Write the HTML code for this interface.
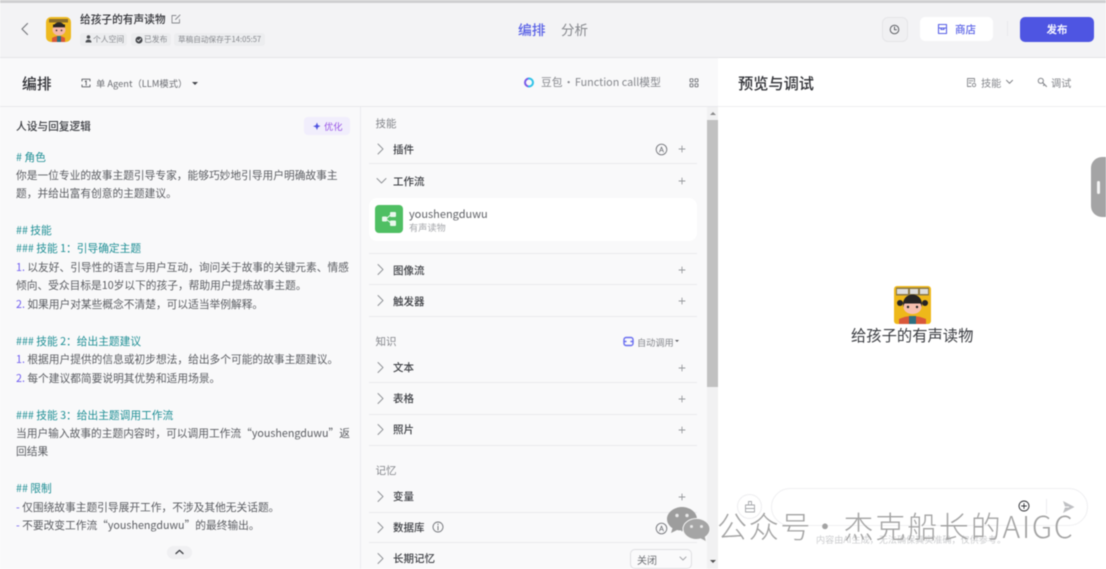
<!DOCTYPE html>
<html lang="zh-CN"><head><meta charset="utf-8"><title>给孩子的有声读物</title>
<style>
*{box-sizing:border-box;margin:0;padding:0}
html,body{width:1106px;height:569px;overflow:hidden;background:#fff}
body{position:relative;font-family:"Noto Sans CJK SC","Liberation Sans",sans-serif;color:#333}
#w{position:absolute;left:0;top:0;width:1106px;height:569px;overflow:hidden;filter:blur(.45px)}
.a{position:absolute;white-space:nowrap}
.l{position:absolute;left:16px;font-size:10.73px;line-height:18px;color:#5a5c61;white-space:nowrap}
.g{color:#1f8f95}
.n{color:#6f5cf0}
.sec{position:absolute;left:375.5px;font-size:10.5px;line-height:16px;color:#84868b}
.it{position:absolute;left:393px;font-size:10.5px;line-height:16px;color:#3c3e43;font-weight:500}
.ln{position:absolute;left:369px;width:328px;height:1px;background:#e9e9ec}
.i{position:absolute;overflow:visible}
.i *{fill:none;stroke-linecap:round;stroke-linejoin:round}
</style></head><body><div id="w">
<div class="a" style="left:0;top:0;width:1106px;height:3px;background:#cfcfd1"></div>
<div class="a" style="left:0;top:3px;width:1106px;height:54px;background:#f3f3f5"></div>
<div class="a" style="left:0;top:57px;width:1106px;height:1px;background:#e4e4e7"></div>
<div class="a" style="left:0;top:58px;width:718px;height:511px;background:#f9f9fa"></div>
<div class="a" style="left:0;top:106px;width:718px;height:1px;background:#e8e8eb"></div>
<div class="a" style="left:718px;top:106px;width:388px;height:1px;background:#eeeef0"></div>
<div class="a" style="left:360px;top:107px;width:1px;height:462px;background:#ececef"></div>

<svg class="i" style="left:20px;top:22px" width="10" height="14" viewBox="0 0 10 14"><path d="M7.5 1.500 2 7l5.500 5.500" stroke="#77797e" stroke-width="1.200"/></svg>

<svg class="i" style="left:46px;top:17px" width="25" height="25" viewBox="0 0 25 25"><rect width="25" height="25" rx="5" style="fill:#eeb91f"/><rect x="3" y="2" width="19" height="3.500" style="fill:#8a6d2a"/><circle cx="13" cy="11" r="5.800" style="fill:#2c2b2b"/><ellipse cx="13" cy="13" rx="6.500" ry="5.500" style="fill:#f5b8a8"/><rect x="7" y="7.500" width="12" height="2.800" style="fill:#272525"/><circle cx="10.500" cy="13.400" r=".8" style="fill:#222"/><circle cx="15.500" cy="13.400" r=".8" style="fill:#222"/><path d="M6 25V21q7-4 13 0v4z" style="fill:#d9583a"/><rect x="11" y="19" width="4" height="6" style="fill:#2d6f80"/></svg>

<div class="a" style="left:80px;top:11px;font-size:10.700px;line-height:18px;color:#2f3035;font-weight:500">给孩子的有声读物</div>
<svg class="i" style="left:171px;top:14px" width="10" height="10" viewBox="0 0 10 10"><path d="M8.500 5.500V9H1V1.500H5M4.500 5.500 9 1" stroke="#85878c" stroke-width=".9"/></svg>

<div class="a" style="left:80px;top:33px;width:47px;height:13px;background:#ecedef;border-radius:3px"></div>
<div class="a" style="left:131px;top:33px;width:40px;height:13px;background:#ecedef;border-radius:3px"></div>
<div class="a" style="left:174px;top:33px;width:91px;height:13px;background:#ecedef;border-radius:3px"></div>
<svg class="i" style="left:85px;top:35px" width="7" height="8" viewBox="0 0 7 8"><circle cx="3.500" cy="2" r="1.800" style="fill:#4c4e52"/><path d="M.5 7.500c0-4 6-4 6 0z" style="fill:#4c4e52"/></svg>
<div class="a" style="left:93px;top:33px;font-size:7.800px;line-height:13px;color:#85878c">个人空间</div>
<svg class="i" style="left:135px;top:35.500px" width="8" height="8" viewBox="0 0 8 8"><circle cx="4" cy="4" r="3.500" style="fill:#43454a"/><path d="M2.300 4 3.600 5.200 5.700 2.800" stroke="#eee" stroke-width=".9"/></svg>
<div class="a" style="left:144px;top:33px;font-size:7.800px;line-height:13px;color:#85878c">已发布</div>
<div class="a" style="left:178px;top:33px;font-size:7.650px;line-height:13px;color:#85878c">草稿自动保存于14:05:57</div>

<div class="a" style="left:518px;top:19px;font-size:13.800px;line-height:20px;color:#5a62e6;font-weight:500">编排</div>
<div class="a" style="left:561px;top:19px;font-size:13.500px;line-height:20px;color:#85878c">分析</div>

<div class="a" style="left:882px;top:17px;width:26px;height:25px;background:#f0f0f2;border:1px solid #e5e5e8;border-radius:6px"></div>
<svg class="i" style="left:889px;top:24px" width="11" height="11" viewBox="0 0 11 11"><circle cx="5.500" cy="5.500" r="4.300" stroke="#5e6065" stroke-width="1"/><path d="M5.500 3v2.700h2" stroke="#5e6065" stroke-width="1"/></svg>
<div class="a" style="left:920px;top:17px;width:73px;height:24px;background:#fff;border-radius:5px"></div>
<svg class="i" style="left:937px;top:23px" width="11" height="12" viewBox="0 0 11 12"><path d="M1.500 1.500h8v9h-8zM1.500 5h8M4 5v1.500h3V5" stroke="#5a62e6" stroke-width="1.100"/></svg>
<div class="a" style="left:955px;top:21px;font-size:10.500px;line-height:18px;color:#5a62e6;font-weight:500">商店</div>
<div class="a" style="left:1007px;top:21px;width:1px;height:15px;background:#e9e9ec"></div>
<div class="a" style="left:1020px;top:17px;width:74px;height:25px;background:#4e55e2;border-radius:5px"></div>
<div class="a" style="left:1046.500px;top:20.500px;font-size:10.500px;line-height:18px;color:#f4f4ff;font-weight:700">发布</div>

<div class="a" style="left:22px;top:73px;font-size:14.800px;line-height:22px;color:#2f3035;font-weight:500">编排</div>
<svg class="i" style="left:81px;top:78px" width="10" height="10" viewBox="0 0 10 10"><path d="M1 3V1.200h8V3M1 7v1.800h8V7M4.200 3.500 5.200 2.800v4.400" stroke="#55575c" stroke-width=".9"/></svg>
<div class="a" style="left:96px;top:76px;font-size:9.300px;line-height:15px;color:#6c6e73">单 Agent（LLM模式）</div>
<div class="a" style="left:192px;top:82px;width:0;height:0;border:3px solid transparent;border-top:3.500px solid #44464b;border-bottom:0"></div>

<svg class="i" style="left:522px;top:76px" width="13" height="13" viewBox="0 0 13 13"><path d="M7 2.500a4 4 0 0 0 0 8" stroke="#7a5be8" stroke-width="2"/><path d="M7 2.500a4 4 0 0 1 0 8" stroke="#2fc3e8" stroke-width="2"/></svg>
<div class="a" style="left:541px;top:75px;font-size:10.800px;line-height:15px;color:#85878c"><span style="word-spacing:-1.700px">豆包 · </span>Function call模型</div>
<svg class="i" style="left:689px;top:78px" width="10" height="10" viewBox="0 0 10 10"><g stroke="#6c6e73" stroke-width=".9"><rect x="1" y=".800" width="3" height="3" rx=".6"/><rect x="6" y=".800" width="3" height="3" rx=".6"/><rect x="1" y="5.800" width="3" height="3" rx=".6"/><rect x="6" y="5.800" width="3" height="3" rx=".6"/></g></svg>

<div class="a" style="left:738px;top:72px;font-size:15.200px;line-height:22px;color:#2f3035;font-weight:500">预览与调试</div>
<svg class="i" style="left:966px;top:77px" width="11" height="11" viewBox="0 0 11 11"><path d="M5 9.500H1.500v-8h7V5M3 3.800h4M3 6h2" stroke="#85878c" stroke-width=".9"/><circle cx="8" cy="8" r="1.700" stroke="#85878c" stroke-width=".9"/></svg>
<div class="a" style="left:981px;top:75px;font-size:10.200px;line-height:15px;color:#85878c">技能</div>
<svg class="i" style="left:1005px;top:79px" width="9" height="6" viewBox="0 0 9 6"><path d="M1.500 1.300 4.500 4.300 7.500 1.300" stroke="#75777c" stroke-width="1"/></svg>
<svg class="i" style="left:1037px;top:77px" width="11" height="11" viewBox="0 0 11 11"><circle cx="3.800" cy="3.800" r="2.600" stroke="#85878c" stroke-width="1"/><path d="M5.700 5.700 9.500 9.500M7.500 7.500 6.500 8.500" stroke="#85878c" stroke-width="1.100"/></svg>
<div class="a" style="left:1051px;top:75px;font-size:10.200px;line-height:15px;color:#85878c">调试</div>

<div class="a" style="left:16px;top:119px;font-size:10.700px;line-height:16px;color:#3a3c41;font-weight:500">人设与回复逻辑</div>
<div class="a" style="left:304px;top:117px;width:46px;height:18px;background:#f1eefc;border-radius:4px"></div>
<svg class="i" style="left:312px;top:122px" width="9" height="9" viewBox="0 0 9 9"><path d="M5 .5 6 3.200 8.500 4 6 5.200 5 8 3.800 5.200 1 4.200 3.800 3.200z" style="fill:#4f53e0"/></svg>
<div class="a" style="left:324px;top:118.500px;font-size:9.300px;line-height:15px;color:#9a57e6">优化</div>

<div class="l g" style="top:148.800px"># 角色</div>
<div class="l" style="top:166.800px">你是一位专业的故事主题引导专家，能够巧妙地引导用户明确故事主</div>
<div class="l" style="top:185.200px">题，并给出富有创意的主题建议。</div>
<div class="l g" style="top:221.800px">## 技能</div>
<div class="l g" style="top:240px">### 技能 1：引导确定主题</div>
<div class="l" style="top:258.800px"><span class="n">1.</span> 以友好、引导性的语言与用户互动，询问关于故事的关键元素、情感</div>
<div class="l" style="top:277.200px">倾向、受众目标是10岁以下的孩子，帮助用户提炼故事主题。</div>
<div class="l" style="top:295.600px"><span class="n">2.</span> 如果用户对某些概念不清楚，可以适当举例解释。</div>
<div class="l g" style="top:332.800px">### 技能 2：给出主题建议</div>
<div class="l" style="top:351.200px"><span class="n">1.</span> 根据用户提供的信息或初步想法，给出多个可能的故事主题建议。</div>
<div class="l" style="top:369.800px"><span class="n">2.</span> 每个建议都简要说明其优势和适用场景。</div>
<div class="l g" style="top:406.600px">### 技能 3：给出主题调用工作流</div>
<div class="l" style="top:425px">当用户输入故事的主题内容时，可以调用工作流“youshengduwu”返</div>
<div class="l" style="top:443.400px">回结果</div>
<div class="l g" style="top:480.200px">## 限制</div>
<div class="l" style="top:498.600px"><span class="n">-</span> 仅围绕故事主题引导展开工作，不涉及其他无关话题。</div>
<div class="l" style="top:517px"><span class="n">-</span> 不要改变工作流“youshengduwu”的最终输出。</div>
<div class="a" style="left:167px;top:546px;width:25px;height:13px;background:#f0f0f2;border-radius:7px"></div>
<svg class="i" style="left:175px;top:549px" width="9" height="6" viewBox="0 0 9 6"><path d="M1 4.500 4.500 1.300 8 4.500" stroke="#3a3c41" stroke-width="1.300"/></svg>

<div class="a" style="left:707px;top:107px;width:11px;height:462px;background:#f1f1f2"></div>
<div class="a" style="left:707px;top:120px;width:11px;height:267px;background:#c1c1c1"></div>
<div class="a" style="left:710px;top:112px;width:0;height:0;border:3px solid transparent;border-bottom:3px solid #8a8a8a;border-top:0"></div>
<div class="a" style="left:709.500px;top:560px;width:0;height:0;border:3px solid transparent;border-top:3px solid #505050;border-bottom:0"></div>

<div class="sec" style="top:116px">技能</div>
<div class="it" style="top:142px">插件</div><div class="ln" style="top:163px"></div>
<div class="it" style="top:174px">工作流</div>
<div class="a" style="left:369px;top:198px;width:328px;height:43px;background:#fff;border-radius:8px"></div>
<div class="a" style="left:375px;top:205px;width:28px;height:28px;background:#4fbf63;border-radius:4px"></div>
<svg class="i" style="left:381px;top:211px" width="16" height="16" viewBox="0 0 16 16"><rect x="1" y="5.500" width="5" height="5" rx="1" style="fill:#e9f8ec"/><rect x="9" y="1" width="6" height="5" rx="1" style="fill:#e9f8ec"/><rect x="9" y="9.500" width="6" height="5.500" rx="1" style="fill:#e9f8ec"/><path d="M5 8 10 3.500M5 8l5 4" stroke="#e9f8ec" stroke-width="1"/></svg>
<div class="a" style="left:409px;top:206px;font-size:11px;line-height:16px;color:#5f6166">youshengduwu</div>
<div class="a" style="left:409px;top:221px;font-size:9.200px;line-height:13px;color:#a5a7ab">有声读物</div>
<div class="ln" style="top:253px"></div>
<div class="it" style="top:263px">图像流</div><div class="ln" style="top:284px"></div>
<div class="it" style="top:294px">触发器</div><div class="ln" style="top:315.500px"></div>

<div class="sec" style="top:333.500px">知识</div>
<svg class="i" style="left:623px;top:336px" width="11" height="11" viewBox="0 0 11 11"><rect x="1" y="1.500" width="9" height="8" rx="2" stroke="#6a6ff0" stroke-width="1.400"/><path d="M1 5.500h2M8 5.500h2" stroke="#6a6ff0" stroke-width="1.400"/></svg>
<div class="a" style="left:637px;top:334.500px;font-size:9.200px;line-height:14px;color:#85878c">自动调用</div>
<div class="a" style="left:674.500px;top:340px;width:0;height:0;border:2.500px solid transparent;border-top:2.500px solid #55575c;border-bottom:0"></div>
<div class="it" style="top:360px">文本</div><div class="ln" style="top:382px"></div>
<div class="it" style="top:391px">表格</div><div class="ln" style="top:413.500px"></div>
<div class="it" style="top:422px">照片</div><div class="ln" style="top:444.500px"></div>
<div class="sec" style="top:462.500px">记忆</div>
<div class="it" style="top:489px">变量</div><div class="ln" style="top:511.500px"></div>
<div class="it" style="top:520px">数据库</div><div class="ln" style="top:542px"></div>
<div class="it" style="top:551px">长期记忆</div>
<svg class="i" style="left:432px;top:521px" width="12" height="12" viewBox="0 0 12 12"><circle cx="6" cy="6" r="5" stroke="#75777c" stroke-width=".9"/><path d="M6 5.300V9M6 3v.6" stroke="#75777c" stroke-width="1"/></svg>
<div class="a" style="left:630px;top:549px;width:62px;height:20px;background:#fafafb;border:1px solid #dfdfe2;border-radius:5px"></div>
<div class="a" style="left:637px;top:552px;font-size:10px;line-height:15px;color:#6c6e73">关闭</div>
<svg class="i" style="left:679px;top:556px" width="8" height="5" viewBox="0 0 8 5"><path d="M1 1 4 4 7 1" stroke="#a5a7ab" stroke-width="1"/></svg>

<svg class="i" style="left:376px;top:143px" width="10" height="425" viewBox="0 0 10 425"><g stroke="#8d8f94" stroke-width=".9">
<path d="M2 1 7 6 2 11"/><path d="M1 35.500 5.500 40 10 35.500"/>
<path d="M2 121.500 7 126.500 2 131.500"/><path d="M2 152.500 7 157.500 2 162.500"/>
<path d="M2 219.500 7 224.500 2 229.500"/><path d="M2 250.500 7 255.500 2 260.500"/><path d="M2 281.500 7 286.500 2 291.500"/>
<path d="M2 348.500 7 353.500 2 358.500"/><path d="M2 379.500 7 384.500 2 389.500"/><path d="M2 410.500 7 415.500 2 420.500"/></g></svg>
<svg class="i" style="left:677px;top:145px" width="10" height="390" viewBox="0 0 10 390"><g stroke="#97999d" stroke-width=".9">
<path d="M2 4h6M5 1v6"/><path d="M2 36h6M5 33v6"/><path d="M2 125h6M5 122v6"/><path d="M2 156h6M5 153v6"/><path d="M2 223h6M5 220v6"/><path d="M2 254h6M5 251v6"/><path d="M2 285h6M5 282v6"/><path d="M2 352h6M5 349v6"/><path d="M2 383h6M5 380v6"/></g></svg>
<svg class="i" style="left:655px;top:143px" width="13" height="13" viewBox="0 0 13 13"><circle cx="6.500" cy="6.500" r="5.300" stroke="#75777c" stroke-width=".9"/><path d="M4.500 9 6.500 4 8.500 9M5.200 7.500h2.600" stroke="#75777c" stroke-width=".8"/></svg>
<svg class="i" style="left:655px;top:522px" width="13" height="13" viewBox="0 0 13 13"><circle cx="6.500" cy="6.500" r="5.300" stroke="#75777c" stroke-width=".9"/><path d="M4.500 9 6.500 4 8.500 9M5.200 7.500h2.600" stroke="#75777c" stroke-width=".8"/></svg>

<svg class="i" style="left:894px;top:286px" width="37" height="38" viewBox="0 0 37 38"><rect width="37" height="38" rx="3" style="fill:#eeb81a"/><rect x="2" y="1.500" width="33" height="8" style="fill:#8d7a45"/><rect x="3" y="3" width="11" height="5" style="fill:#ddd"/><rect x="16" y="3" width="8" height="5" style="fill:#ddd"/><rect x="26" y="3" width="8" height="5" style="fill:#ddd"/><circle cx="6" cy="17" r="3" style="fill:#262424"/><circle cx="31" cy="17" r="3" style="fill:#262424"/><circle cx="18.500" cy="18" r="9.500" style="fill:#262424"/><ellipse cx="18.500" cy="21" rx="9" ry="7" style="fill:#f6c0b0"/><rect x="10" y="14" width="17" height="3.500" style="fill:#262424"/><circle cx="14" cy="21" r="1.200" style="fill:#222"/><circle cx="23" cy="21" r="1.200" style="fill:#222"/><path d="M5 38V33q13-6 27 0v5z" style="fill:#d9583a"/><rect x="15" y="30" width="7" height="8" style="fill:#2d6f80"/></svg>
<div class="a" style="left:851px;top:325px;font-size:15.300px;line-height:20px;color:#3a3c41">给孩子的有声读物</div>

<div class="a" style="left:1091px;top:157px;width:15px;height:60px;background:#a4a4a5;border-radius:11px 0 0 11px"></div>
<div class="a" style="left:1097px;top:181px;width:3px;height:13px;background:#f4f4f4;border-radius:1.500px"></div>

<div class="a" style="left:737px;top:494px;width:25px;height:25px;background:#fff;border:1px solid #ededef;border-radius:50%"></div>
<svg class="i" style="left:744px;top:500px" width="12" height="13" viewBox="0 0 12 13"><path d="M1.500 5h9v7h-9zM4.500 5V1.500h3V5M1.500 8.500h9" stroke="#a5a7ab" stroke-width=".9"/></svg>
<div class="a" style="left:771px;top:488px;width:317px;height:38px;background:#fff;border:1px solid #efeff1;border-radius:19px"></div>
<div class="a" style="left:1046px;top:499px;width:1px;height:15px;background:#ededef"></div>
<svg class="i" style="left:1018px;top:500px" width="12" height="12" viewBox="0 0 12 12"><circle cx="6" cy="6" r="5" stroke="#2f3035" stroke-width=".9"/><path d="M3.500 6h5M6 3.500v5" stroke="#2f3035" stroke-width=".9"/></svg>
<svg class="i" style="left:1062px;top:500px" width="13" height="14" viewBox="0 0 13 14"><path d="M1 1 12.500 7 1 13 3 7.500H7V6.500H3z" style="fill:#bfc0c3"/></svg>
<div class="a" style="left:816px;top:532.500px;font-size:9.100px;line-height:13px;color:#cbccce">内容由AI生成，无法确保真实准确，仅供参考。</div>

<svg class="i" style="left:666px;top:505px" width="44" height="38" viewBox="0 0 44 38"><path d="M16 2C8 2 1 7.500 1 14c0 3.700 2.200 7 5.500 9.200L5 28l6-3c1.600.4 3.200.6 5 .6 8 0 15-5 15-11.600S24 2 16 2z" style="fill:#9d9d9d"/><circle cx="11" cy="10.500" r="1.700" style="fill:#e8e8e8"/><circle cx="21" cy="10.500" r="1.700" style="fill:#e8e8e8"/><path d="M30.500 13.500C23.500 13.500 17 18 17 24s6.500 10.500 13.500 10.500c1.500 0 2.900-.2 4.300-.6L40.500 37l-1.200-5c2.800-1.900 4.700-4.700 4.700-8 0-6-6.500-10.500-13.500-10.500z" style="fill:#a5a5a5;stroke:#f6f6f6;stroke-width:1"/><circle cx="25.500" cy="21.500" r="1.500" style="fill:#e8e8e8"/><circle cx="35.500" cy="21.500" r="1.500" style="fill:#e8e8e8"/></svg>
<div class="a" style="left:717px;top:503px;font-size:30px;line-height:44px;color:#a3a3a3;letter-spacing:1.700px;font-weight:300">公众号</div>
<div class="a" style="left:810px;top:503px;font-size:30px;line-height:44px;color:#a3a3a3;font-weight:300">·</div>
<div class="a" style="left:843.500px;top:503px;font-size:30px;line-height:44px;color:#a3a3a3;letter-spacing:1.800px;font-weight:300">杰克船长的AIGC</div>
</div></body></html>
